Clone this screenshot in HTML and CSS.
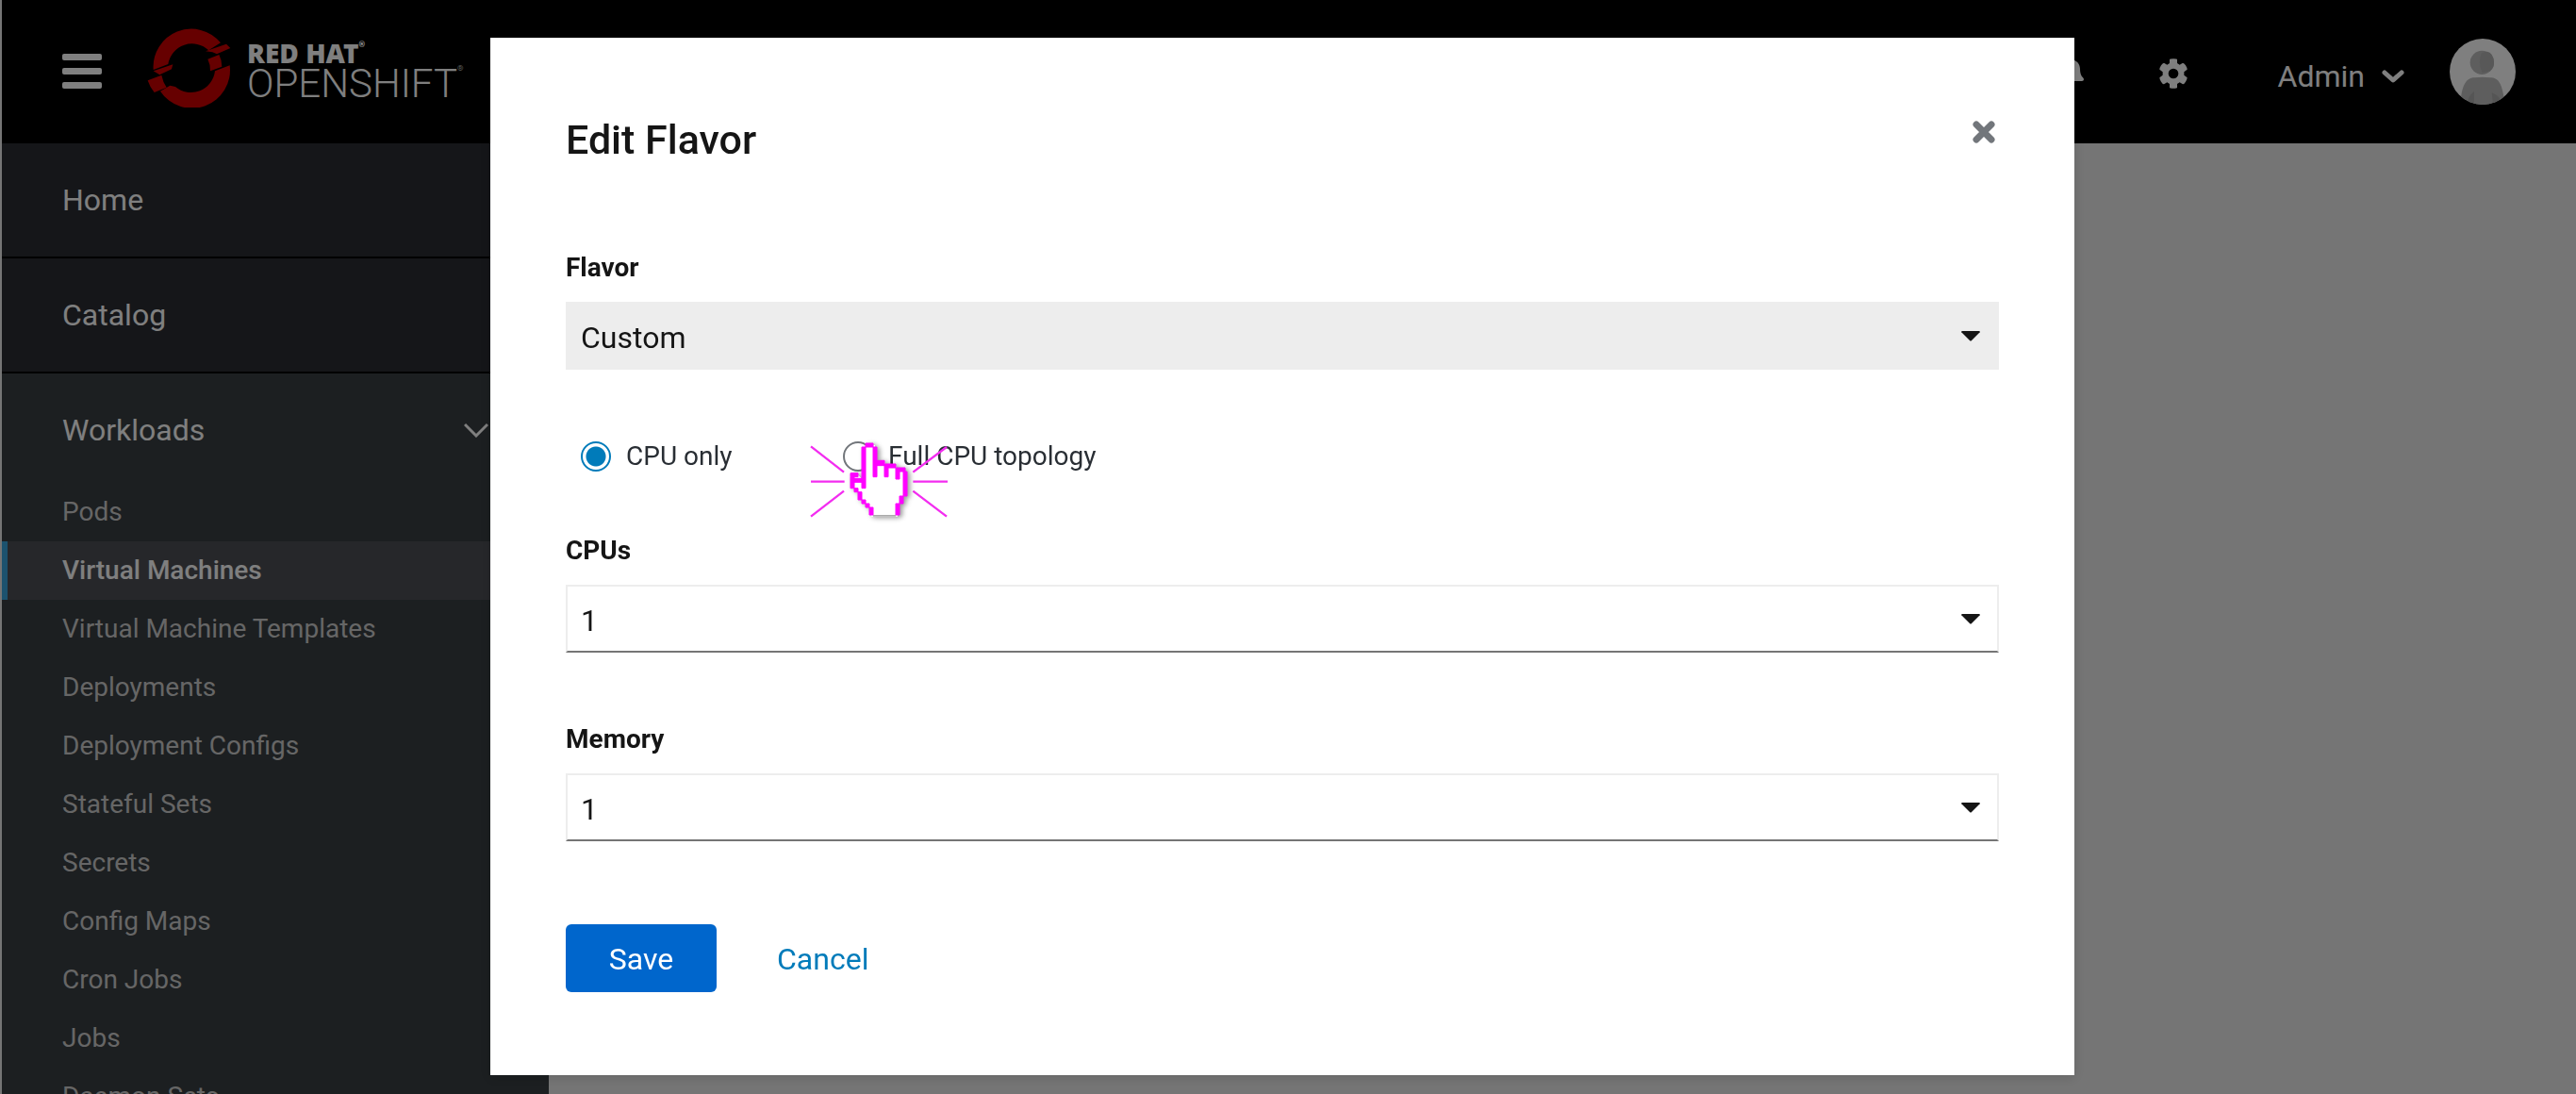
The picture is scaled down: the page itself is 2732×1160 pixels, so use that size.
FILE: index.html
```html
<!DOCTYPE html>
<html lang="en">
<head>
<meta charset="utf-8">
<meta name="viewport" content="width=device-width, initial-scale=1">
<title>Edit Flavor - Red Hat OpenShift</title>
<link rel="stylesheet" href="styles.css">
</head>
<body>
<div class="app">
  <header class="masthead">
    <button class="icon-button" type="button" aria-label="Toggle navigation">
      <svg width="42" height="38" viewBox="0 0 42 38" fill="currentColor" aria-hidden="true"><rect width="42" height="7" rx="2"/><rect y="15" width="42" height="7" rx="2"/><rect y="30" width="42" height="7" rx="2"/></svg>
    </button>
    <a class="brand" href="#">
      <svg class="brand-mark" width="90" height="84" viewBox="20 36 270 252" aria-hidden="true">
        <path d="M40 168A121 121 0 0 1 254 82L216 106A77 77 0 0 0 87 150Z"/>
        <path d="M206 109L272 86L285 99L242 118L228 112Z"/>
        <path d="M213 134L249 120Q258 138 258 158L221 172Q222 152 213 134Z"/>
        <path d="M283 154A121 121 0 0 1 62 236L93 218L110 222A77 77 0 0 0 236 172Z"/>
        <path d="M40 172L102 151L98 166L60 184Z"/>
        <path d="M22 202L66 185Q70 206 82 224L43 240Q28 222 22 202Z"/>
      </svg>
      <span class="brand-text"><span class="brand-top">RED HAT<sup>®</sup></span><span class="brand-name">OPENSHIFT<sup>®</sup></span></span>
    </a>
    <div class="tools">
      <button class="icon-button" type="button" aria-label="Notifications">
        <svg width="28" height="32" viewBox="0 0 448 512" fill="currentColor" aria-hidden="true"><path d="M224 512c35 0 64-29 64-64H160c0 35 29 64 64 64zm215-150c-19-21-55-52-55-154 0-78-54-140-128-155V32a32 32 0 1 0-64 0v21C118 68 64 130 64 208c0 102-36 133-55 154-6 6-9 14-9 22 0 16 13 32 32 32h384c19 0 32-16 32-32 0-8-3-16-9-22z"/></svg>
      </button>
      <button class="icon-button gear" type="button" aria-label="Settings">
        <svg width="30" height="32" viewBox="0 0 90 96" fill="currentColor" fill-rule="evenodd" aria-hidden="true"><path d="M33 4Q33 1 45 1T57 4V15L65 20L75 14Q79 14 84 22T89 35L79 43V53L89 61Q89 66 84 74T75 82L65 76L57 81V92Q57 95 45 95T33 92V81L25 76L15 82Q11 82 6 74T1 61L11 53V43L1 35Q1 30 6 22T15 14L25 20L33 15ZM45 32A16 16 0 1 0 45 64A16 16 0 1 0 45 32Z"/></svg>
      </button>
      <button class="user" type="button">Admin
        <svg width="24" height="16" viewBox="0 0 24 16" fill="none" stroke="currentColor" stroke-width="5" stroke-linecap="round" stroke-linejoin="round" aria-hidden="true"><path d="M3 4L12 12L21 4"/></svg>
      </button>
      <svg width="70" height="70" viewBox="0 0 210 210" role="img" aria-label="Admin avatar">
        <clipPath id="face"><circle cx="105" cy="105" r="105"/></clipPath>
        <g clip-path="url(#face)"><rect width="210" height="210" fill="#fff"/><circle cx="103" cy="76" r="38" fill="#bcbcbc"/><path d="M102 45Q88 76 104 108Q142 106 141 76Q140 44 118 41Z" fill="#b0b0b0"/><path d="M34 210C38 145 54 124 80 124Q104 121 128 124C158 124 168 145 176 210Z" fill="#bcbcbc"/><path d="M56 210Q58 182 78 168V210ZM134 172Q156 180 160 194V210H138Z" fill="#aaa"/></g>
      </svg>
    </div>
  </header>
  <div class="page">
    <nav class="sidebar" aria-label="Main">
      <a class="nav-section" href="#">Home</a>
      <a class="nav-section" href="#">Catalog</a>
      <a class="nav-section open" href="#">Workloads
        <svg width="26" height="16" viewBox="0 0 26 16" fill="none" stroke="currentColor" stroke-width="3" aria-hidden="true"><path d="M1 2L13 14L25 2"/></svg>
      </a>
      <ul class="nav-list">
        <li><a href="#">Pods</a></li>
        <li><a class="current" href="#" aria-current="page">Virtual Machines</a></li>
        <li><a href="#">Virtual Machine Templates</a></li>
        <li><a href="#">Deployments</a></li>
        <li><a href="#">Deployment Configs</a></li>
        <li><a href="#">Stateful Sets</a></li>
        <li><a href="#">Secrets</a></li>
        <li><a href="#">Config Maps</a></li>
        <li><a href="#">Cron Jobs</a></li>
        <li><a href="#">Jobs</a></li>
        <li><a href="#">Daemon Sets</a></li>
      </ul>
    </nav>
    <main class="content"></main>
  </div>
</div>

<div class="backdrop">
  <form class="modal" role="dialog" aria-modal="true" aria-labelledby="modal-title">
    <div class="modal-head">
      <h1 id="modal-title">Edit Flavor</h1>
      <button class="close" type="button" aria-label="Close">
        <svg width="24" height="24" viewBox="0 0 24 24" fill="none" stroke="currentColor" stroke-width="7" stroke-linecap="round" aria-hidden="true"><path d="M4 4L20 20M20 4L4 20"/></svg>
      </button>
    </div>

    <div class="field">
      <label for="flavor">Flavor</label>
      <div class="select filled">
        <select id="flavor"><option>Custom</option></select>
        <svg width="20" height="11" viewBox="0 0 20 11" aria-hidden="true"><path d="M1 0H19Q21 1 19 2L11 10Q10 11 9 10L1 2Q-1 1 1 0Z"/></svg>
      </div>
    </div>

    <div class="radios" role="radiogroup" aria-label="CPU mode">
      <label class="radio"><input type="radio" name="mode" checked>CPU only</label>
      <label class="radio target"><input type="radio" name="mode">Full CPU topology
        <svg class="pointer" width="170" height="110" viewBox="0 0 510 330" aria-hidden="true">
          <path d="M30 70L135 152M30 182H137M30 293L135 212M462 72L355 152M355 182H465M355 212L462 293" fill="none" stroke="#f32df0" stroke-width="7"/>
          <g class="hand">
            <path d="M204 66H234V121H264L270 132H300L306 144H330V228H318V252H306V293H222V264H210V252H198V240H186V215H174V203H162V161H180L198 178V72Z" fill="#fff"/>
            <path d="M228 288H300V293H228Z" fill="#aaa"/>
            <path d="M204 60h24v12h-24zM192 72h12v131h-12zM228 72h12v95h-12zM240 115h24v16h-24zM264 126h12v41h-12zM276 126h24v12h-24zM300 138h30v12h-30zM300 150h12v24h-12zM324 150h12v78h-12zM312 228h12v24h-12zM300 252h12v36h-12zM156 155h24v12h-24zM156 167h12v36h-12zM168 172h24v12h-24zM168 203h12v12h-12zM180 215h12v25h-12zM192 240h12v12h-12zM204 252h12v12h-12zM216 264h12v24h-12z" fill="#f0f" stroke="#f0f" stroke-width="3"/>
          </g>
        </svg>
      </label>
    </div>

    <div class="field">
      <label for="cpus">CPUs</label>
      <div class="select">
        <select id="cpus"><option>1</option></select>
        <svg width="20" height="11" viewBox="0 0 20 11" aria-hidden="true"><path d="M1 0H19Q21 1 19 2L11 10Q10 11 9 10L1 2Q-1 1 1 0Z"/></svg>
      </div>
    </div>

    <div class="field memory">
      <label for="memory">Memory</label>
      <div class="select">
        <select id="memory"><option>1</option></select>
        <svg width="20" height="11" viewBox="0 0 20 11" aria-hidden="true"><path d="M1 0H19Q21 1 19 2L11 10Q10 11 9 10L1 2Q-1 1 1 0Z"/></svg>
      </div>
    </div>

    <div class="actions">
      <button class="save" type="submit">Save</button>
      <button class="cancel" type="button">Cancel</button>
    </div>
  </form>
</div>
</body>
</html>
```
FILE: styles.css
```css
* { box-sizing: border-box; }

body {
  margin: 0;
  font-family: Roboto, "Liberation Sans", sans-serif;
  font-size: 28px;
  line-height: 40px;
  color: #151515;
}

a { color: inherit; text-decoration: none; }
svg { display: block; flex: none; }

button {
  padding: 0;
  border: 0;
  background: none;
  color: inherit;
  font: inherit;
  cursor: pointer;
}

.app {
  display: flex;
  flex-direction: column;
  height: 100vh;
  overflow: hidden;
  border-left: 2px solid #ebebeb;
}

/* Masthead */
.masthead {
  display: flex;
  flex: none;
  align-items: center;
  padding: 30px 64px;
  background: #000;
  color: #fff;
}

.brand { display: flex; align-items: center; margin-left: 48px; gap: 16px; }
.brand-mark { fill: #c00; margin-bottom: 8px; }
.brand-text { display: flex; flex-direction: column; }
.brand-text sup { font-size: 8px; line-height: 8px; vertical-align: top; }
.brand-top { font-family: "Noto Sans", sans-serif; font-size: 28px; font-weight: 900; line-height: 26px; }
.brand-name { font-size: 42px; font-weight: 300; line-height: 40px; }

.tools { display: flex; align-items: center; margin-left: auto; }
.gear { margin: 4px 96px 0 80px; }
.user {
  display: flex;
  align-items: center;
  gap: 18px;
  margin-right: 48px;
  padding-top: 10px;
  font-size: 32px;
}

/* Sidebar */
.page { display: flex; flex: 1; min-height: 0; }
.sidebar { width: 580px; flex: none; background: #383e42; color: #fff; }
.content { flex: 1; background: #ebebeb; }

.nav-section {
  display: flex;
  align-items: center;
  justify-content: space-between;
  padding: 40px 64px;
  border-bottom: 2px solid #000;
  background: #2a2c32;
  font-size: 32px;
}
.nav-section.open { padding-bottom: 36px; border: 0; background: none; }

.nav-list { margin: 0; padding: 0; list-style: none; color: #ccc; }
.nav-list a { display: block; padding: 11px 64px; }
.nav-list .current {
  padding-left: 58px;
  border-left: 6px solid #39a5dc;
  background: #4d4f55;
  color: #fff;
  font-weight: 500;
}

/* Modal */
.backdrop {
  position: fixed;
  inset: 0;
  display: flex;
  align-items: flex-start;
  justify-content: center;
  padding: 40px 12px 0 0;
  background: rgba(0, 0, 0, .5);
}

.modal {
  width: 100%;
  max-width: 1680px;
  padding: 80px 80px 88px;
  background: #fff;
  box-shadow: 0 2px 12px rgba(0, 0, 0, .15);
}

.modal-head { display: flex; justify-content: space-between; margin-bottom: 88px; }
.modal-head h1 { margin: 0; font-size: 43px; font-weight: 500; line-height: 56px; }
.close { align-self: flex-start; padding: 8px 4px; color: #72767b; }

.field { display: flex; flex-direction: column; gap: 16px; }
.field label { font-weight: 700; }
.memory { margin-top: 72px; }

.select {
  display: grid;
  align-items: center;
  height: 72px;
  border: 2px solid #ededed;
  border-bottom-color: #757575;
}
.filled { border-color: #ededed; background: #ededed; }
.select > * { grid-area: 1 / 1; }
.select select {
  width: 100%;
  height: 100%;
  padding: 4px 48px 0 14px;
  border: 0;
  appearance: none;
  background: none;
  color: inherit;
  font: inherit;
  font-size: 32px;
}
.select svg { justify-self: end; margin-right: 18px; fill: #151515; pointer-events: none; }

.radios { display: grid; grid-template-columns: 278px max-content; margin: 72px 16px 60px; }
.radio { display: flex; align-items: center; gap: 16px; color: #292e34; }
.radio input {
  width: 32px;
  height: 32px;
  margin: 0;
  border: 2px solid #72767b;
  border-radius: 50%;
  appearance: none;
  background: #fff;
}
.radio input:checked {
  border-color: #007bba;
  background: radial-gradient(circle, #007bba 10px, #fff 11px);
}

/* Click marker over the second radio */
.target { position: relative; }
.pointer { position: absolute; left: -44px; top: -14px; pointer-events: none; }
.hand { filter: drop-shadow(8px 4px 8px rgba(0, 0, 0, .4)); }

.actions { display: flex; gap: 64px; margin-top: 88px; font-size: 32px; }
.save { width: 160px; height: 72px; padding-top: 2px; border-radius: 6px; background: #06c; color: #fff; }
.cancel { padding-top: 2px; color: #007bba; }
```
